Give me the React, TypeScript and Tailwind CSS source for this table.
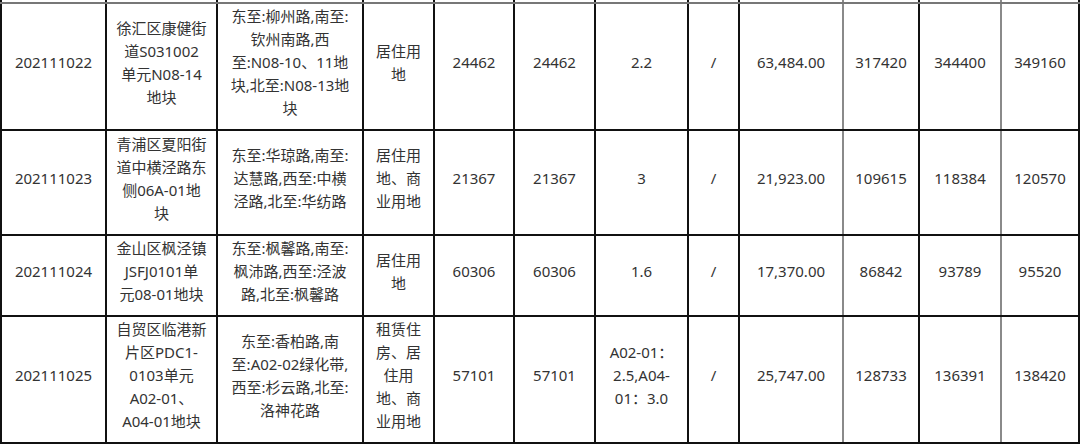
import React from "react";

type Row = {
  id: string;
  name: string[];
  bounds: string[];
  use: string[];
  area: string;
  build: string;
  far: string[];
  h: string;
  cells: [string, string, string, string];
};

// 地块出让信息（截取部分行）
const rows: Row[] = [
  {
    id: "202111022",
    name: ["徐汇区康健街", "道S031002", "单元N08-14", "地块"],
    bounds: ["东至:柳州路,南至:", "钦州南路,西", "至:N08-10、11地", "块,北至:N08-13地", "块"],
    use: ["居住用", "地"],
    area: "24462",
    build: "24462",
    far: ["2.2"],
    h: "h-[127px]",
    cells: ["63,484.00", "317420", "344400", "349160"],
  },
  {
    id: "202111023",
    name: ["青浦区夏阳街", "道中横泾路东", "侧06A-01地", "块"],
    bounds: ["东至:华琼路,南至:", "达慧路,西至:中横", "泾路,北至:华纺路"],
    use: ["居住用", "地、商", "业用地"],
    area: "21367",
    build: "21367",
    far: ["3"],
    h: "h-[105px]",
    cells: ["21,923.00", "109615", "118384", "120570"],
  },
  {
    id: "202111024",
    name: ["金山区枫泾镇", "JSFJ0101单", "元08-01地块"],
    bounds: ["东至:枫馨路,南至:", "枫沛路,西至:泾波", "路,北至:枫馨路"],
    use: ["居住用", "地"],
    area: "60306",
    build: "60306",
    far: ["1.6"],
    h: "h-[81px]",
    cells: ["17,370.00", "86842", "93789", "95520"],
  },
  {
    id: "202111025",
    name: ["自贸区临港新", "片区PDC1-", "0103单元", "A02-01、", "A04-01地块"],
    bounds: ["东至:香柏路,南", "至:A02-02绿化带,", "西至:杉云路,北至:", "洛神花路"],
    use: ["租赁住", "房、居", "住用", "地、商", "业用地"],
    area: "57101",
    build: "57101",
    far: ["A02-01：", "2.5,A04-", "01：3.0"],
    h: "h-[127px]",
    cells: ["25,747.00", "128733", "136391", "138420"],
  },
];

// 每列右边框：黑线或灰线
const rightBorder = [
  "border-r-[#111]",
  "border-r-[#111]",
  "border-r-[#111]",
  "border-r-[#111]",
  "border-r-[#111]",
  "border-r-[#111]",
  "border-r-[#111]",
  "border-r-[#111]",
  "border-r-[#8a8a8a]",
  "border-r-[#111]",
  "border-r-[#8a8a8a]",
  "border-r-[#111]",
];

const widths = [105, 111, 146, 71, 80, 81, 93, 51, 104, 76, 82, 78];

function Lines({ items }: { items: string[] }) {
  return (
    <>
      {items.map((t, i) => (
        <div key={i} className="whitespace-nowrap">
          {t}
        </div>
      ))}
    </>
  );
}

function Cell({ col, children }: { col: number; children: React.ReactNode }) {
  return (
    <td
      className={`border-r-2 border-b-2 border-b-[#111] ${rightBorder[col]} ${
        col === 0 ? "border-l-2 border-l-[#111]" : ""
      } px-0 pt-0 pb-[8px] text-center align-middle`}
    >
      {children}
    </td>
  );
}

export default function App() {
  return (
    <div
      className="h-[446px] w-[1080px] overflow-hidden bg-white text-[15px] leading-[23px] text-[#333]"
      style={{ fontFamily: '"Noto Sans", "Noto Sans CJK SC", sans-serif' }}
    >
      <table className="w-[1078px] table-fixed border-collapse">
        <colgroup>
          {widths.map((w, i) => (
            <col key={i} style={{ width: w }} />
          ))}
        </colgroup>
        <tbody>
          {/* 上一行的残留部分 */}
          <tr className="h-[3px]">
            {widths.map((_, i) => (
              <td
                key={i}
                className={`border-r-2 border-b-2 border-b-[#777] ${rightBorder[i]} ${
                  i === 0 ? "border-l-2 border-l-[#111]" : ""
                } p-0`}
              />
            ))}
          </tr>
          {rows.map((r) => (
            <tr key={r.id} className={r.h}>
              <Cell col={0}>{r.id}</Cell>
              <Cell col={1}>
                <Lines items={r.name} />
              </Cell>
              <Cell col={2}>
                <Lines items={r.bounds} />
              </Cell>
              <Cell col={3}>
                <Lines items={r.use} />
              </Cell>
              <Cell col={4}>{r.area}</Cell>
              <Cell col={5}>{r.build}</Cell>
              <Cell col={6}>
                <Lines items={r.far} />
              </Cell>
              <Cell col={7}>/</Cell>
              {r.cells.map((c, i) => (
                <Cell key={i} col={8 + i}>
                  {c}
                </Cell>
              ))}
            </tr>
          ))}
        </tbody>
      </table>
    </div>
  );
}
